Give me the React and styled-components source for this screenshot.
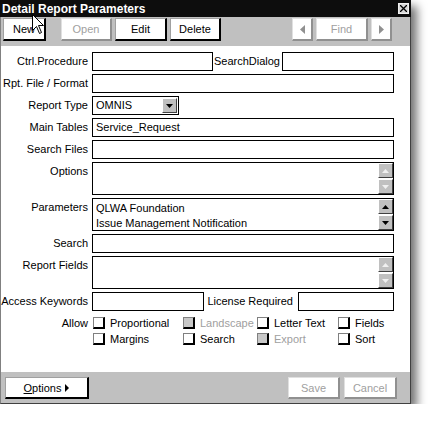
import React from 'react';
import styled, { createGlobalStyle, css } from 'styled-components';

const Global = createGlobalStyle`
  html, body {
    margin: 0;
    padding: 0;
    background: #ffffff;
  }
  body {
    font-family: "Liberation Sans", Arial, sans-serif;
    font-size: 11px;
    color: #000;
  }
`

const Window = styled.div`
  position: relative;
  width: 411px;
  height: 404px;
  box-sizing: border-box;
  border-left: 1px solid #808080;
  border-right: 1px solid #404040;
  border-bottom: 1px solid #404040;
  display: flex;
  flex-direction: column;
  background: #ffffff;
  box-shadow: 6px 6px 9px rgba(0, 0, 0, 0.55);
`

const TitleBar = styled.div`
  height: 17px;
  margin-left: -1px;
  margin-right: -1px;
  background: #0d0d0d;
  color: #fff;
  display: flex;
  align-items: center;
  justify-content: space-between;
  padding: 0 2px 0 2px;
  font-weight: bold;
  font-size: 12px;
`

const CloseBox = styled.div`
  width: 9px;
  height: 9px;
  background: #d8d8d8;
  border: 1px solid #f0f0f0;
  display: flex;
  align-items: center;
  justify-content: center;
`

const Toolbar = styled.div`
  height: 29px;
  box-sizing: border-box;
  background: #c0c0c0;
  display: flex;
  align-items: flex-start;
  padding: 1px 0 0 2px;
`

const Button = styled.button`
  box-sizing: border-box;
  height: ${p => p.$h || 23}px;
  width: ${p => p.$w}px;
  margin-left: ${p => p.$ml || 0}px;
  padding: 0;
  background: #ffffff;
  font-family: inherit;
  font-size: 11px;
  color: ${p => (p.disabled ? '#a0a0a0' : '#000')};
  border-top: 1px solid ${p => (p.disabled ? '#e0e0e0' : '#a0a0a0')};
  border-left: 1px solid ${p => (p.disabled ? '#e0e0e0' : '#a0a0a0')};
  border-right: 2px solid ${p => (p.disabled ? '#909090' : '#000')};
  border-bottom: 2px solid ${p => (p.disabled ? '#909090' : '#000')};
  display: flex;
  align-items: center;
  justify-content: center;
  gap: 4px;
`

const Spacer = styled.div`
  flex: 1;
`

const Form = styled.div`
  flex: 1;
  display: flex;
  flex-direction: column;
  gap: 3px;
  padding: 6px 16px 0 0;
`

const Row = styled.div`
  display: flex;
  align-items: flex-start;
`

const Label = styled.div`
  width: ${p => p.$w || 87}px;
  flex: none;
  text-align: right;
  padding-right: ${p => (p.$pr === undefined ? 4 : p.$pr)}px;
  line-height: 19px;
  font-size: 11px;
  white-space: nowrap;
`

const Field = styled.div`
  box-sizing: border-box;
  height: ${p => p.$h || 19}px;
  ${p => (p.$w ? css`width: ${p.$w}px; flex: none;` : css`flex: 1;`)}
  border: 1px solid #000;
  background: #fff;
  font-size: 11px;
  line-height: 17px;
  padding-left: 3px;
  display: flex;
  align-items: ${p => (p.$center ? 'center' : 'stretch')};
`

const FieldText = styled.div`
  flex: 1;
  white-space: nowrap;
  overflow: hidden;
`

const ListText = styled.div`
  flex: 1;
  padding-top: 2px;
  line-height: 15px;
  white-space: nowrap;
  overflow: hidden;
`

const DropButton = styled.div`
  width: 15px;
  height: 15px;
  box-sizing: border-box;
  background: #c0c0c0;
  border-top: 1px solid #fff;
  border-left: 1px solid #fff;
  border-right: 1px solid #404040;
  border-bottom: 1px solid #404040;
  display: flex;
  align-items: center;
  justify-content: center;
  margin: 0 1px 0 0;
`

const ScrollCol = styled.div`
  display: flex;
  flex-direction: column;
  gap: 1px;
  margin-right: -1px;
`

const Arrow = ({ up, color }) => (
  <svg width="7" height="4" viewBox="0 0 7 4">
    <polygon points={up ? '3.5,0 7,4 0,4' : '0,0 7,0 3.5,4'} fill={color} />
  </svg>
)

const Checks = styled.div`
  display: grid;
  grid-template-columns: 90px 74px 81px auto;
  grid-auto-rows: 16px;
  margin-left: 1px;
  margin-top: 1px;
`

const CheckItem = styled.div`
  display: flex;
  align-items: center;
  gap: 5px;
  font-size: 11px;
  color: ${p => (p.$off ? '#a0a0a0' : '#000')};
`

const Box = styled.div`
  width: 12px;
  height: 12px;
  box-sizing: border-box;
  background: ${p => (p.$off ? '#c8c8c8' : '#fff')};
  border-top: 1px solid #808080;
  border-left: 1px solid #808080;
  border-right: 2px solid #000;
  border-bottom: 2px solid #000;
`

const BottomBar = styled.div`
  height: 31px;
  box-sizing: border-box;
  background: #c0c0c0;
  display: flex;
  align-items: flex-start;
  padding: 5px 0 0 4px;
`

const Cursor = styled.svg`
  position: absolute;
  left: 31px;
  top: 14px;
`

const checks = [
  ['Proportional', false],
  ['Landscape', true],
  ['Letter Text', false],
  ['Fields', false],
  ['Margins', false],
  ['Search', false],
  ['Export', true],
  ['Sort', false],
]

const ScrollList = ({ lines = [], enabled }) => (
  <Field $h={33}>
    <ListText>
      {lines.map(l => <div key={l}>{l}</div>)}
    </ListText>
    <ScrollCol>
      <DropButton><Arrow up color={enabled ? '#000' : '#f0f0f0'} /></DropButton>
      <DropButton><Arrow color={enabled ? '#000' : '#f0f0f0'} /></DropButton>
    </ScrollCol>
  </Field>
)

export default function App() {
  return (
    <>
      <Global />
      <Window>
        <TitleBar>
          <span>Detail Report Parameters</span>
          <CloseBox>
            <svg width="7" height="7" viewBox="0 0 7 7">
              <path d="M0 0L7 7M7 0L0 7" stroke="#000" strokeWidth="1.3" />
            </svg>
          </CloseBox>
        </TitleBar>
        <Toolbar>
          <Button $w={43}>New</Button>
          <Button $w={51} $ml={15} disabled>Open</Button>
          <Button $w={52} $ml={3}>Edit</Button>
          <Button $w={51} $ml={3}>Delete</Button>
          <Spacer />
          <Button $w={21} disabled>
            <svg width="5" height="9" viewBox="0 0 5 9"><polygon points="5,0 5,9 0,4.5" fill="#909090" /></svg>
          </Button>
          <Button $w={52} $ml={3} disabled>Find</Button>
          <Button $w={21} $ml={3} disabled>
            <svg width="5" height="9" viewBox="0 0 5 9"><polygon points="0,0 5,4.5 0,9" fill="#909090" /></svg>
          </Button>
          <div style={{ width: 18 }} />
        </Toolbar>
        <Form>
          <Row>
            <Label>Ctrl.Procedure</Label>
            <Field $w={121} />
            <Label $w={67} $pr={2}>SearchDialog</Label>
            <Field />
          </Row>
          <Row>
            <Label>Rpt. File / Format</Label>
            <Field />
          </Row>
          <Row>
            <Label>Report Type</Label>
            <Field $w={87} $center>
              <FieldText>OMNIS</FieldText>
              <DropButton><Arrow color="#000" /></DropButton>
            </Field>
          </Row>
          <Row>
            <Label>Main Tables</Label>
            <Field><FieldText>Service_Request</FieldText></Field>
          </Row>
          <Row>
            <Label>Search Files</Label>
            <Field />
          </Row>
          <Row>
            <Label>Options</Label>
            <ScrollList />
          </Row>
          <Row>
            <Label>Parameters</Label>
            <ScrollList enabled lines={['QLWA Foundation', 'Issue Management Notification']} />
          </Row>
          <Row>
            <Label>Search</Label>
            <Field />
          </Row>
          <Row>
            <Label>Report Fields</Label>
            <ScrollList />
          </Row>
          <Row>
            <Label>Access Keywords</Label>
            <Field $w={112} />
            <Label $w={89} $pr={5}>License Required</Label>
            <Field />
          </Row>
          <Row>
            <Label>Allow</Label>
            <Checks>
              {checks.map(([t, off]) => (
                <CheckItem key={t} $off={off}>
                  <Box $off={off} />
                  <span>{t}</span>
                </CheckItem>
              ))}
            </Checks>
          </Row>
        </Form>
        <BottomBar>
          <Button $w={84} $h={22}>
            <span><u>O</u>ptions</span>
            <svg width="4" height="8" viewBox="0 0 4 8"><polygon points="0,0 4,4 0,8" fill="#000" /></svg>
          </Button>
          <Spacer />
          <Button $w={52} $h={22} disabled>Save</Button>
          <Button $w={53} $h={22} $ml={4} disabled>Cancel</Button>
          <div style={{ width: 13 }} />
        </BottomBar>
        <Cursor width="13" height="21" viewBox="0 0 13 21">
          <path d="M0.5 0.5 L0.5 16.5 L4.5 12.5 L7.5 19.5 L9.5 18.5 L6.5 11.5 L11.5 11.5 Z" fill="#fff" stroke="#000" strokeWidth="1" />
        </Cursor>
      </Window>
    </>
  );
}
